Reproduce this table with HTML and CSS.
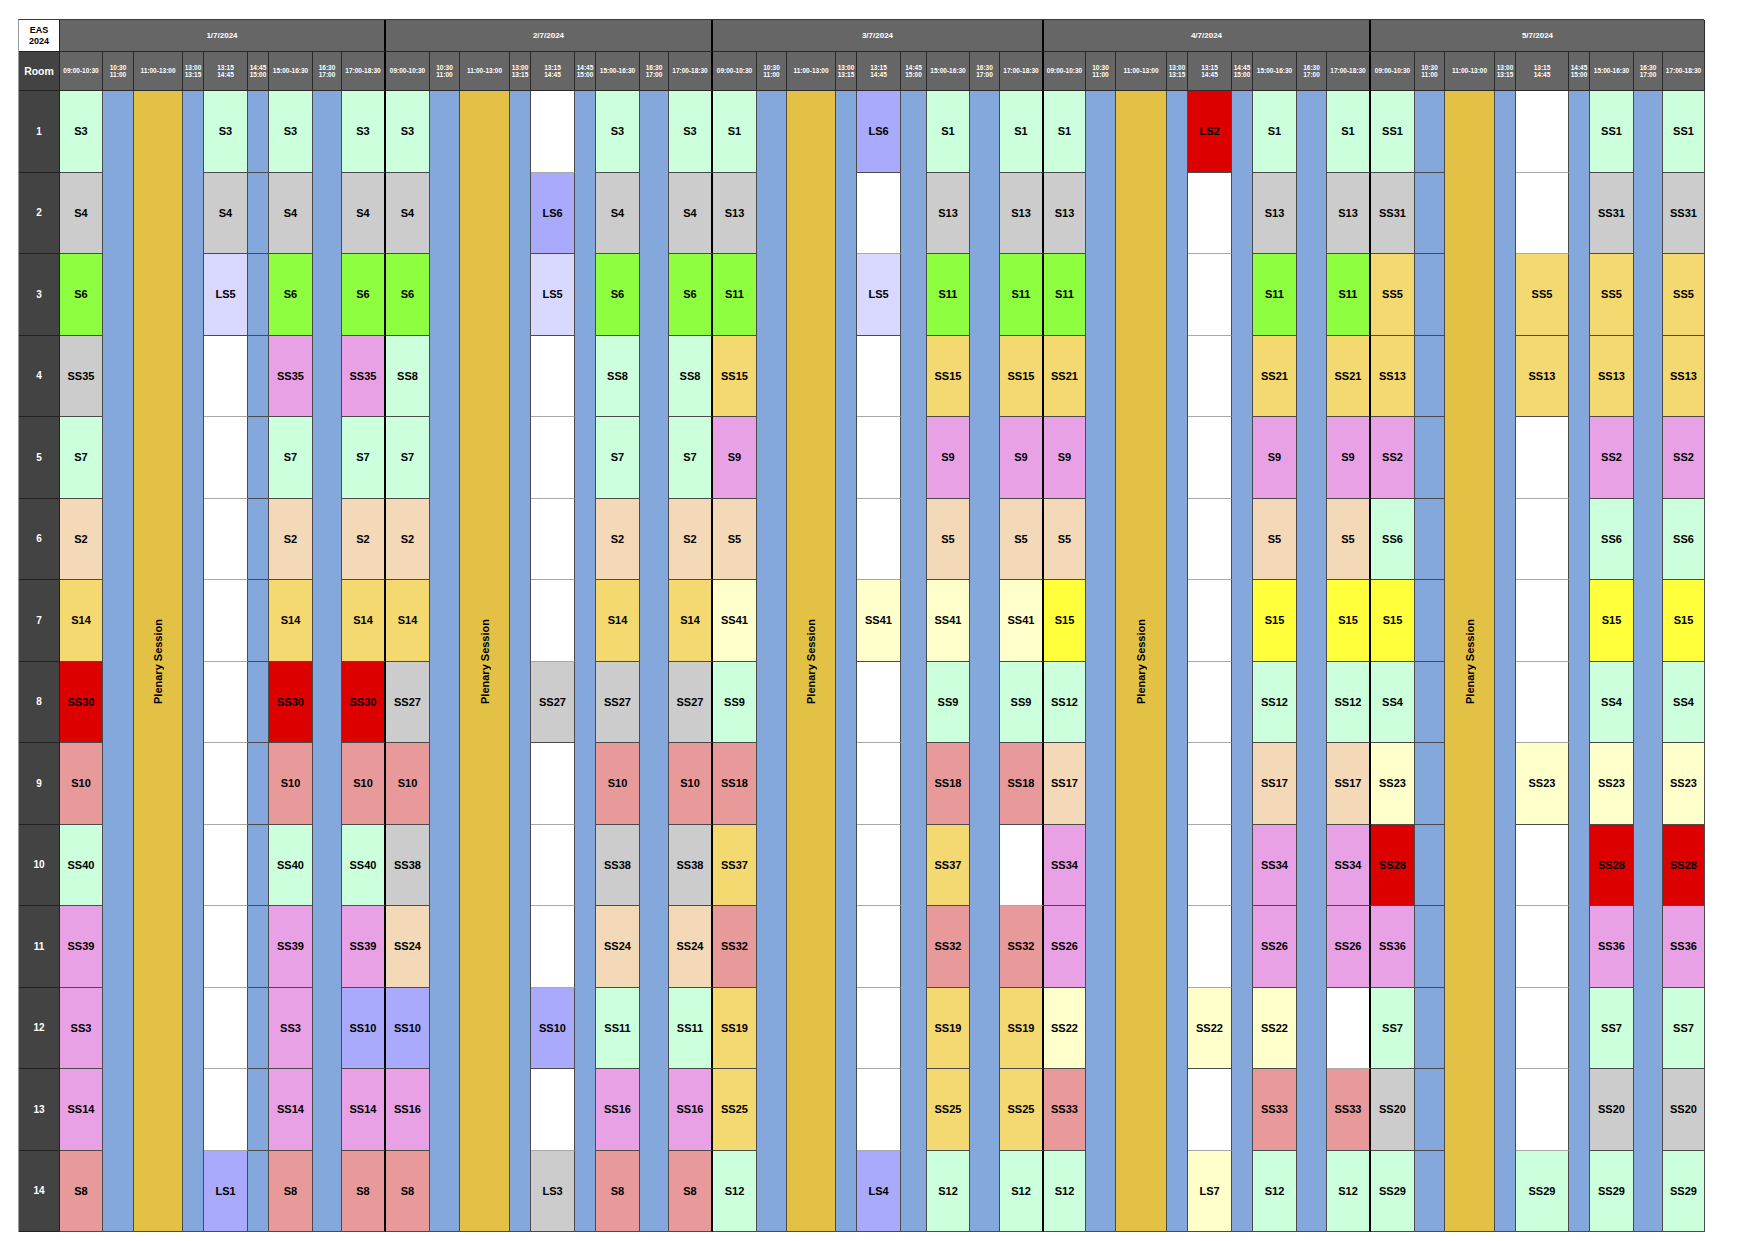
FILE: index.html
```html
<!DOCTYPE html>
<html lang="en">
<head>
<meta charset="utf-8">
<title>EAS 2024 – Room schedule</title>
<link rel="stylesheet" href="styles.css">
</head>
<body>
<div class="page">
<div class="sheet">
  <!-- header row 1 -->
  <div class="corner">EAS<br>2024</div>
  <div class="day e">1/7/2024</div>
  <div class="day e">2/7/2024</div>
  <div class="day e">3/7/2024</div>
  <div class="day e">4/7/2024</div>
  <div class="day">5/7/2024</div>

  <!-- header row 2 -->
  <div class="room">Room</div>
  <div class="t">09:00-10:30</div><div class="t">10:30<br>11:00</div><div class="t">11:00-13:00</div><div class="t">13:00<br>13:15</div><div class="t">13:15<br>14:45</div><div class="t">14:45<br>15:00</div><div class="t">15:00-16:30</div><div class="t">16:30<br>17:00</div><div class="t e">17:00-18:30</div>
  <div class="t">09:00-10:30</div><div class="t">10:30<br>11:00</div><div class="t">11:00-13:00</div><div class="t">13:00<br>13:15</div><div class="t">13:15<br>14:45</div><div class="t">14:45<br>15:00</div><div class="t">15:00-16:30</div><div class="t">16:30<br>17:00</div><div class="t e">17:00-18:30</div>
  <div class="t">09:00-10:30</div><div class="t">10:30<br>11:00</div><div class="t">11:00-13:00</div><div class="t">13:00<br>13:15</div><div class="t">13:15<br>14:45</div><div class="t">14:45<br>15:00</div><div class="t">15:00-16:30</div><div class="t">16:30<br>17:00</div><div class="t e">17:00-18:30</div>
  <div class="t">09:00-10:30</div><div class="t">10:30<br>11:00</div><div class="t">11:00-13:00</div><div class="t">13:00<br>13:15</div><div class="t">13:15<br>14:45</div><div class="t">14:45<br>15:00</div><div class="t">15:00-16:30</div><div class="t">16:30<br>17:00</div><div class="t e">17:00-18:30</div>
  <div class="t">09:00-10:30</div><div class="t">10:30<br>11:00</div><div class="t">11:00-13:00</div><div class="t">13:00<br>13:15</div><div class="t">13:15<br>14:45</div><div class="t">14:45<br>15:00</div><div class="t">15:00-16:30</div><div class="t">16:30<br>17:00</div><div class="t">17:00-18:30</div>

  <!-- room 1 -->
  <div class="rn">1</div>
  <div class="c g">S3</div><div class="c bl sp"></div><div class="c pl"><span>Plenary Session</span></div><div class="c bl sp"></div><div class="c g">S3</div><div class="c bl"></div><div class="c g">S3</div><div class="c bl sp"></div><div class="c g e">S3</div>
  <div class="c g">S3</div><div class="c bl sp"></div><div class="c pl"><span>Plenary Session</span></div><div class="c bl sp"></div><div class="c w"></div><div class="c bl sp"></div><div class="c g">S3</div><div class="c bl sp"></div><div class="c g e">S3</div>
  <div class="c g">S1</div><div class="c bl sp"></div><div class="c pl"><span>Plenary Session</span></div><div class="c bl sp"></div><div class="c pu">LS6</div><div class="c bl sp"></div><div class="c g">S1</div><div class="c bl sp"></div><div class="c g e">S1</div>
  <div class="c g">S1</div><div class="c bl sp"></div><div class="c pl"><span>Plenary Session</span></div><div class="c bl sp"></div><div class="c r">LS2</div><div class="c bl sp"></div><div class="c g">S1</div><div class="c bl sp"></div><div class="c g e">S1</div>
  <div class="c g">SS1</div><div class="c bl"></div><div class="c pl"><span>Plenary Session</span></div><div class="c bl sp"></div><div class="c w"></div><div class="c bl sp"></div><div class="c g">SS1</div><div class="c bl sp"></div><div class="c g">SS1</div>

  <!-- room 2 -->
  <div class="rn">2</div>
  <div class="c k">S4</div><div class="c k">S4</div><div class="c bl"></div><div class="c k">S4</div><div class="c k e">S4</div>
  <div class="c k">S4</div><div class="c pu">LS6</div><div class="c k">S4</div><div class="c k e">S4</div>
  <div class="c k">S13</div><div class="c w"></div><div class="c k">S13</div><div class="c k e">S13</div>
  <div class="c k">S13</div><div class="c w"></div><div class="c k">S13</div><div class="c k e">S13</div>
  <div class="c k">SS31</div><div class="c bl"></div><div class="c w"></div><div class="c k">SS31</div><div class="c k">SS31</div>

  <!-- room 3 -->
  <div class="rn">3</div>
  <div class="c lg">S6</div><div class="c lv">LS5</div><div class="c bl"></div><div class="c lg">S6</div><div class="c lg e">S6</div>
  <div class="c lg">S6</div><div class="c lv">LS5</div><div class="c lg">S6</div><div class="c lg e">S6</div>
  <div class="c lg">S11</div><div class="c lv">LS5</div><div class="c lg">S11</div><div class="c lg e">S11</div>
  <div class="c lg">S11</div><div class="c w"></div><div class="c lg">S11</div><div class="c lg e">S11</div>
  <div class="c go">SS5</div><div class="c bl"></div><div class="c go">SS5</div><div class="c go">SS5</div><div class="c go">SS5</div>

  <!-- room 4 -->
  <div class="rn">4</div>
  <div class="c k">SS35</div><div class="c w"></div><div class="c bl"></div><div class="c pk">SS35</div><div class="c pk e">SS35</div>
  <div class="c g">SS8</div><div class="c w"></div><div class="c g">SS8</div><div class="c g e">SS8</div>
  <div class="c go">SS15</div><div class="c w"></div><div class="c go">SS15</div><div class="c go e">SS15</div>
  <div class="c go">SS21</div><div class="c w"></div><div class="c go">SS21</div><div class="c go e">SS21</div>
  <div class="c go">SS13</div><div class="c bl"></div><div class="c go">SS13</div><div class="c go">SS13</div><div class="c go">SS13</div>

  <!-- room 5 -->
  <div class="rn">5</div>
  <div class="c g">S7</div><div class="c w"></div><div class="c bl"></div><div class="c g">S7</div><div class="c g e">S7</div>
  <div class="c g">S7</div><div class="c w"></div><div class="c g">S7</div><div class="c g e">S7</div>
  <div class="c pk">S9</div><div class="c w"></div><div class="c pk">S9</div><div class="c pk e">S9</div>
  <div class="c pk">S9</div><div class="c w"></div><div class="c pk">S9</div><div class="c pk e">S9</div>
  <div class="c pk">SS2</div><div class="c bl"></div><div class="c w"></div><div class="c pk">SS2</div><div class="c pk">SS2</div>

  <!-- room 6 -->
  <div class="rn">6</div>
  <div class="c pe">S2</div><div class="c w"></div><div class="c bl"></div><div class="c pe">S2</div><div class="c pe e">S2</div>
  <div class="c pe">S2</div><div class="c w"></div><div class="c pe">S2</div><div class="c pe e">S2</div>
  <div class="c pe">S5</div><div class="c w"></div><div class="c pe">S5</div><div class="c pe e">S5</div>
  <div class="c pe">S5</div><div class="c w"></div><div class="c pe">S5</div><div class="c pe e">S5</div>
  <div class="c g">SS6</div><div class="c bl"></div><div class="c w"></div><div class="c g">SS6</div><div class="c g">SS6</div>

  <!-- room 7 -->
  <div class="rn">7</div>
  <div class="c go">S14</div><div class="c w"></div><div class="c bl"></div><div class="c go">S14</div><div class="c go e">S14</div>
  <div class="c go">S14</div><div class="c w"></div><div class="c go">S14</div><div class="c go e">S14</div>
  <div class="c ly">SS41</div><div class="c ly">SS41</div><div class="c ly">SS41</div><div class="c ly e">SS41</div>
  <div class="c y">S15</div><div class="c w"></div><div class="c y">S15</div><div class="c y e">S15</div>
  <div class="c y">S15</div><div class="c bl"></div><div class="c w"></div><div class="c y">S15</div><div class="c y">S15</div>

  <!-- room 8 -->
  <div class="rn">8</div>
  <div class="c r">SS30</div><div class="c w"></div><div class="c bl"></div><div class="c r">SS30</div><div class="c r e">SS30</div>
  <div class="c k">SS27</div><div class="c k">SS27</div><div class="c k">SS27</div><div class="c k e">SS27</div>
  <div class="c g">SS9</div><div class="c w"></div><div class="c g">SS9</div><div class="c g e">SS9</div>
  <div class="c g">SS12</div><div class="c w"></div><div class="c g">SS12</div><div class="c g e">SS12</div>
  <div class="c g">SS4</div><div class="c bl"></div><div class="c w"></div><div class="c g">SS4</div><div class="c g">SS4</div>

  <!-- room 9 -->
  <div class="rn">9</div>
  <div class="c sa">S10</div><div class="c w"></div><div class="c bl"></div><div class="c sa">S10</div><div class="c sa e">S10</div>
  <div class="c sa">S10</div><div class="c w"></div><div class="c sa">S10</div><div class="c sa e">S10</div>
  <div class="c sa">SS18</div><div class="c w"></div><div class="c sa">SS18</div><div class="c sa e">SS18</div>
  <div class="c pe">SS17</div><div class="c w"></div><div class="c pe">SS17</div><div class="c pe e">SS17</div>
  <div class="c ly">SS23</div><div class="c bl"></div><div class="c ly">SS23</div><div class="c ly">SS23</div><div class="c ly">SS23</div>

  <!-- room 10 -->
  <div class="rn">10</div>
  <div class="c g">SS40</div><div class="c w"></div><div class="c bl"></div><div class="c g">SS40</div><div class="c g e">SS40</div>
  <div class="c k">SS38</div><div class="c w"></div><div class="c k">SS38</div><div class="c k e">SS38</div>
  <div class="c go">SS37</div><div class="c w"></div><div class="c go">SS37</div><div class="c w e"></div>
  <div class="c pk">SS34</div><div class="c w"></div><div class="c pk">SS34</div><div class="c pk e">SS34</div>
  <div class="c r">SS28</div><div class="c bl"></div><div class="c w"></div><div class="c r">SS28</div><div class="c r">SS28</div>

  <!-- room 11 -->
  <div class="rn">11</div>
  <div class="c pk">SS39</div><div class="c w"></div><div class="c bl"></div><div class="c pk">SS39</div><div class="c pk e">SS39</div>
  <div class="c pe">SS24</div><div class="c w"></div><div class="c pe">SS24</div><div class="c pe e">SS24</div>
  <div class="c sa">SS32</div><div class="c w"></div><div class="c sa">SS32</div><div class="c sa e">SS32</div>
  <div class="c pk">SS26</div><div class="c w"></div><div class="c pk">SS26</div><div class="c pk e">SS26</div>
  <div class="c pk">SS36</div><div class="c bl"></div><div class="c w"></div><div class="c pk">SS36</div><div class="c pk">SS36</div>

  <!-- room 12 -->
  <div class="rn">12</div>
  <div class="c pk">SS3</div><div class="c w"></div><div class="c bl"></div><div class="c pk">SS3</div><div class="c pu e">SS10</div>
  <div class="c pu">SS10</div><div class="c pu">SS10</div><div class="c g">SS11</div><div class="c g e">SS11</div>
  <div class="c go">SS19</div><div class="c w"></div><div class="c go">SS19</div><div class="c go e">SS19</div>
  <div class="c ly">SS22</div><div class="c ly">SS22</div><div class="c ly">SS22</div><div class="c w e"></div>
  <div class="c g">SS7</div><div class="c bl"></div><div class="c w"></div><div class="c g">SS7</div><div class="c g">SS7</div>

  <!-- room 13 -->
  <div class="rn">13</div>
  <div class="c pk">SS14</div><div class="c w"></div><div class="c bl"></div><div class="c pk">SS14</div><div class="c pk e">SS14</div>
  <div class="c pk">SS16</div><div class="c w"></div><div class="c pk">SS16</div><div class="c pk e">SS16</div>
  <div class="c go">SS25</div><div class="c w"></div><div class="c go">SS25</div><div class="c go e">SS25</div>
  <div class="c sa">SS33</div><div class="c w"></div><div class="c sa">SS33</div><div class="c sa e">SS33</div>
  <div class="c k">SS20</div><div class="c bl"></div><div class="c w"></div><div class="c k">SS20</div><div class="c k">SS20</div>

  <!-- room 14 -->
  <div class="rn">14</div>
  <div class="c sa">S8</div><div class="c pu">LS1</div><div class="c bl"></div><div class="c sa">S8</div><div class="c sa e">S8</div>
  <div class="c sa">S8</div><div class="c k">LS3</div><div class="c sa">S8</div><div class="c sa e">S8</div>
  <div class="c g">S12</div><div class="c pu">LS4</div><div class="c g">S12</div><div class="c g e">S12</div>
  <div class="c g">S12</div><div class="c ly">LS7</div><div class="c g">S12</div><div class="c g e">S12</div>
  <div class="c g">SS29</div><div class="c bl"></div><div class="c g">SS29</div><div class="c g">SS29</div><div class="c g">SS29</div>
</div>
</div>
</body>
</html>
```

FILE: styles.css
```css
* {
  box-sizing: border-box;
}

body {
  margin: 0;
  background: #ffffff;
  font-family: "Liberation Sans", Arial, sans-serif;
}

.page {
  padding: 19px 0 0 18px;
}

.sheet {
  display: grid;
  width: 1686px;
  grid-template-columns:
    41px
    43px 31px 49px 21px 44px 21px 44px 29px 44px
    44px 30px 50px 21px 44px 21px 44px 29px 44px
    44px 30px 49px 21px 44px 26px 43px 30px 44px
    42px 30px 51px 21px 44px 21px 44px 30px 44px
    44px 30px 50px 21px 53px 21px 44px 29px 42px;
  grid-template-rows: 32px 39px repeat(14, 81.5px);
  border-top: 1px solid #3a3a3a;
  border-left: 1px solid #9a9a9a;
}

/* header */
.corner {
  background: #ffffff;
  color: #000;
  font-weight: bold;
  font-size: 9px;
  line-height: 10.5px;
  display: flex;
  align-items: center;
  justify-content: center;
  text-align: center;
  border-right: 1px solid #222;
  border-bottom: 1px solid #222;
}

.day {
  grid-column: span 9;
  background: #666666;
  color: #ffffff;
  font-weight: bold;
  font-size: 8px;
  display: flex;
  align-items: center;
  justify-content: center;
  border-right: 1px solid #2a2a2a;
  border-bottom: 1px solid #2a2a2a;
}

.room {
  background: #434343;
  color: #ffffff;
  font-weight: bold;
  font-size: 10.5px;
  display: flex;
  align-items: center;
  justify-content: center;
  border-right: 1px solid #222;
  border-bottom: 1px solid #222;
}

.t {
  background: #666666;
  color: #ffffff;
  font-weight: bold;
  font-size: 6.5px;
  line-height: 7.5px;
  display: flex;
  align-items: center;
  justify-content: center;
  text-align: center;
  white-space: nowrap;
  border-right: 1px solid #2a2a2a;
  border-bottom: 1px solid #2a2a2a;
}

.rn {
  background: #434343;
  color: #ffffff;
  font-weight: bold;
  font-size: 10px;
  display: flex;
  align-items: center;
  justify-content: center;
  border-right: 1px solid #222;
  border-bottom: 1px solid #222;
}

/* body cells */
.c {
  display: flex;
  align-items: center;
  justify-content: center;
  font-weight: bold;
  font-size: 11px;
  color: #000;
  white-space: nowrap;
  border-right: 1px solid #4a4a4a;
  border-bottom: 1px solid #4a4a4a;
}

.e {
  border-right: 2px solid #000;
}

.sp {
  grid-row: span 14;
}

.pl {
  grid-row: span 14;
  background: #e2c145;
}

.pl span {
  writing-mode: vertical-rl;
  transform: rotate(180deg);
}

.bl { background: #84a8db; }
.g  { background: #ccffdb; }
.k  { background: #cccccc; }
.lg { background: #8eff40; }
.lv { background: #d9d9ff; }
.pu { background: #a9aafb; }
.pk { background: #e9a1e6; }
.pe { background: #f4d9b8; }
.go { background: #f4d870; }
.r  { background: #dd0000; }
.sa { background: #e89a9a; }
.ly { background: #ffffcc; }
.y  { background: #ffff3c; }
.w  {
  background: #ffffff;
  border-bottom-color: #a8a8a8;
}
```
